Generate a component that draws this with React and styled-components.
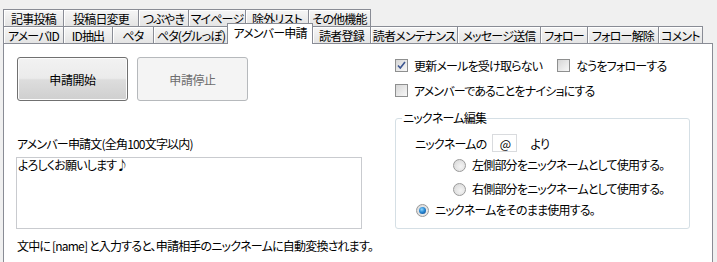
import React from 'react';
import styled, { createGlobalStyle } from 'styled-components';

const Global = createGlobalStyle`
  html, body { margin: 0; padding: 0; background: #f0f0f0; }
  body {
    font-family: "Noto Sans CJK JP", "Noto Sans", sans-serif;
    font-size: 12px;
    color: #000;
  }
`;

const Root = styled.div`
  width: 717px;
  height: 262px;
  overflow: hidden;
  background: #f0f0f0;
  box-sizing: border-box;
  padding: 9px 0 0 3px;
  font-feature-settings: "palt";
  letter-spacing: -0.8px;
  display: flex;
  flex-direction: column;
`;

const TabRow = styled.div`
  display: flex;
  align-items: flex-end;
  height: 17px;
  flex: none;
  position: relative;
`;

const Tab = styled.div`
  box-sizing: border-box;
  width: ${p => p.w + 1}px;
  height: 17px;
  margin-right: -1px;
  border: 1px solid #898c95;
  border-bottom: none;
  background: linear-gradient(#f6f6f6, #e4e4e4);
  box-shadow: inset 1px 1px 0 #fff;
  display: flex;
  align-items: center;
  justify-content: center;
  font-size: 12px;
  line-height: 13px;
  color: #000;
  white-space: nowrap;
`;

const ActiveTab = styled(Tab)`
  width: ${p => p.w + 2}px;
  margin: 0 -1px -1px -1px;
  height: 21px;
  background: #fff;
  box-shadow: none;
  position: relative;
  z-index: 2;
  padding-bottom: 3px;
  line-height: 12px;
`;

const Panel = styled.div`
  box-sizing: border-box;
  width: 710px;
  height: 240px;
  flex: none;
  border: 1px solid #898c95;
  background: #fff;
  display: flex;
  padding: 13px 0 0 12px;
`;

const LeftCol = styled.div`
  width: 346px;
  display: flex;
  flex-direction: column;
`;

const ButtonRow = styled.div`
  display: flex;
  gap: 9px;
  margin-left: 1px;
`;

const Button = styled.button`
  box-sizing: border-box;
  width: 111px;
  height: 44px;
  border-radius: 3px;
  font-family: inherit;
  font-size: 12px;
  font-feature-settings: "palt";
  letter-spacing: -0.4px;
  padding: 0;
  border: 1px solid ${p => (p.disabled ? '#b6b9bc' : '#707070')};
  background: ${p =>
    p.disabled
      ? '#f4f4f4'
      : 'linear-gradient(#f2f2f2 0%, #ebebeb 48%, #dddddd 52%, #cfcfcf 100%)'};
  box-shadow: ${p => (p.disabled ? 'none' : 'inset 0 0 0 1px #fcfcfc')};
  color: ${p => (p.disabled ? '#6d6d6d' : '#000')};
`;

const Label = styled.div`
  margin: 36px 0 0 1px;
  height: 14px;
  line-height: 14px;
  font-size: 12px;
  white-space: nowrap;
`;

const TextBox = styled.div`
  box-sizing: border-box;
  margin-top: 6px;
  width: 346px;
  height: 72px;
  border: 1px solid #c9cbcf;
  padding: 0 1px;
  line-height: 14px;
  font-size: 12px;
`;

const Note = styled.div`
  margin: 10px 0 0 1px;
  line-height: 14px;
  white-space: nowrap;
`;

const RightCol = styled.div`
  margin-left: 33px;
  width: 295px;
  display: flex;
  flex-direction: column;
  padding-top: 2px;
`;

const CheckRow = styled.div`
  display: flex;
  align-items: center;
  height: 13px;
  gap: 15px;
  margin-top: ${p => p.mt || 0}px;
`;

const CheckItem = styled.label`
  display: flex;
  align-items: center;
  gap: 6px;
  white-space: nowrap;
  line-height: 13px;
`;

const Box = styled.span`
  box-sizing: border-box;
  width: 13px;
  height: 13px;
  border: 1px solid #8e8f8f;
  background: linear-gradient(135deg, #d6d6d6, #f8f8f8);
  display: flex;
  align-items: center;
  justify-content: center;
`;

const Group = styled.fieldset`
  box-sizing: border-box;
  margin: 14px 0 0 0;
  width: 295px;
  height: 118px;
  border: 1px solid #d5dfe5;
  border-radius: 3px;
  padding: 0 0 0 19px;
  display: flex;
  flex-direction: column;
`;

const Legend = styled.legend`
  padding: 0 1px;
  margin-left: -13px;
  line-height: 14px;
  font-size: 12px;
`;

const NickRow = styled.div`
  display: flex;
  align-items: center;
  margin-top: 9px;
  height: 18px;
  white-space: nowrap;
`;

const AtBox = styled.span`
  box-sizing: border-box;
  width: 25px;
  height: 18px;
  border: 1px solid #d9dbde;
  margin: 0 13px 0 6px;
  display: flex;
  align-items: center;
  justify-content: center;
  font-size: 12px;
`;

const RadioRow = styled.label`
  display: flex;
  align-items: center;
  gap: 6px;
  height: 14px;
  white-space: nowrap;
  margin-top: ${p => p.mt}px;
  margin-left: ${p => p.ml}px;
  line-height: 14px;
`;

const Radio = styled.span`
  box-sizing: border-box;
  width: 13px;
  height: 13px;
  border-radius: 50%;
  border: 1px solid #9a9a9a;
  background: radial-gradient(circle at 60% 60%, #f4f4f4, #d4d4d4);
  display: flex;
  align-items: center;
  justify-content: center;
  &::after {
    content: '';
    display: ${p => (p.on ? 'block' : 'none')};
    width: 7px;
    height: 7px;
    border-radius: 50%;
    background: radial-gradient(circle at 40% 35%, #8fd6ff 0%, #2a8ad4 45%, #0a3f86 100%);
  }
`;

const Check = () => (
  <svg width="9" height="9" viewBox="0 0 9 9">
    <path d="M1 4.5 L3.3 7 L8 1" fill="none" stroke="#3c5590" strokeWidth="1.6" />
  </svg>
);

const row1 = [
  ['記事投稿', 60],
  ['投稿日変更', 75],
  ['つぶやき', 50],
  ['マイページ', 57],
  ['除外リスト', 63],
  ['その他機能', 62],
];

const row2 = [
  ['アメーバID', 60],
  ['ID抽出', 49],
  ['ペタ', 41],
  ['ペタ(グルっぽ)', 75],
  ['アメンバー申請', 84, true],
  ['読者登録', 58],
  ['読者メンテナンス', 87],
  ['メッセージ送信', 83],
  ['フォロー', 47],
  ['フォロー解除', 71],
  ['コメント', 44],
];

export default function App() {
  return (
    <>
      <Global />
      <Root>
        <TabRow>
          {row1.map(([t, w]) => (
            <Tab key={t} w={w}>{t}</Tab>
          ))}
        </TabRow>
        <TabRow>
          {row2.map(([t, w, a]) =>
            a ? (
              <ActiveTab key={t} w={w}>{t}</ActiveTab>
            ) : (
              <Tab key={t} w={w}>{t}</Tab>
            )
          )}
        </TabRow>
        <Panel>
          <LeftCol>
            <ButtonRow>
              <Button>申請開始</Button>
              <Button disabled>申請停止</Button>
            </ButtonRow>
            <Label>アメンバー申請文(全角100文字以内)</Label>
            <TextBox>よろしくお願いします♪</TextBox>
            <Note>文中に [name] と入力すると、申請相手のニックネームに自動変換されます。</Note>
          </LeftCol>
          <RightCol>
            <CheckRow>
              <CheckItem><Box><Check /></Box>更新メールを受け取らない</CheckItem>
              <CheckItem><Box />なうをフォローする</CheckItem>
            </CheckRow>
            <CheckRow mt={12}>
              <CheckItem><Box />アメンバーであることをナイショにする</CheckItem>
            </CheckRow>
            <Group>
              <Legend>ニックネーム編集</Legend>
              <NickRow>
                ニックネームの<AtBox>@</AtBox>より
              </NickRow>
              <RadioRow mt={6} ml={38}><Radio />左側部分をニックネームとして使用する。</RadioRow>
              <RadioRow mt={10} ml={38}><Radio />右側部分をニックネームとして使用する。</RadioRow>
              <RadioRow mt={7} ml={1}><Radio on />ニックネームをそのまま使用する。</RadioRow>
            </Group>
          </RightCol>
        </Panel>
      </Root>
    </>
  );
}
